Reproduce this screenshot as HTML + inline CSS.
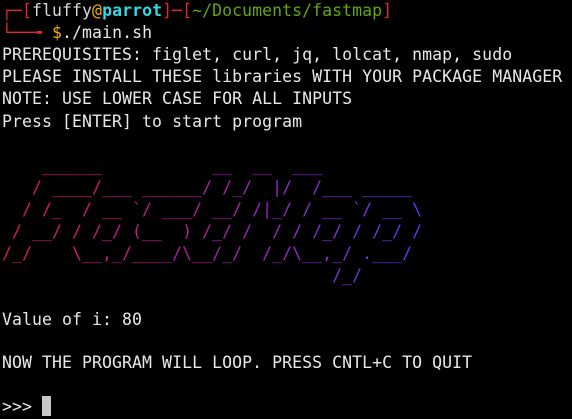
<!DOCTYPE html>
<html><head><meta charset="utf-8"><style>
html,body{margin:0;padding:0;background:#000;width:572px;height:419px;overflow:hidden}
.t{position:relative;font-family:"DejaVu Sans Mono","Liberation Mono",monospace;font-size:16.5px;color:#e8e8e8;white-space:pre;letter-spacing:0.07px}
.t div{position:absolute;left:2px;height:22px;line-height:22px;overflow:visible}
.r{color:#e8262a}.y{color:#f0b400}.c{color:#35d7e0;font-weight:bold}.g{color:#5fa80f}.w{color:#d8d8d8}
.f{background:linear-gradient(90deg,#e0185a 0px,#b01fa0 200px,#5a3cff 420px);-webkit-background-clip:text;background-clip:text;color:transparent;width:440px}
.cur{display:inline-block;width:9px;height:20px;background:#c8c8c8;vertical-align:-4px}
</style></head><body><div class="t">
<div style="top:0px"><span class="r">┌─[</span><span class="w">fluffy</span><span class="y">@</span><span class="c">parrot</span><span class="r">]─[</span><span class="g">~/Documents/fastmap</span><span class="r">]</span></div>
<div style="top:22px"><span class="r">└──╼ </span><span class="y">$</span>./main.sh</div>
<div style="top:44px">PREREQUISITES: figlet, curl, jq, lolcat, nmap, sudo</div>
<div style="top:66px">PLEASE INSTALL THESE libraries WITH YOUR PACKAGE MANAGER</div>
<div style="top:88px">NOTE: USE LOWER CASE FOR ALL INPUTS</div>
<div style="top:111px">Press [ENTER] to start program</div>
<div class="f" style="top:155px">    ______           __  __  ___</div>
<div class="f" style="top:177px">   / ____/___ ______/ /_/  |/  /___ _____</div>
<div class="f" style="top:199px">  / /_  / __ `/ ___/ __/ /|_/ / __ `/ __ \</div>
<div class="f" style="top:221px"> / __/ / /_/ (__  ) /_/ /  / / /_/ / /_/ /</div>
<div class="f" style="top:243px">/_/    \__,_/____/\__/_/  /_/\__,_/ .___/</div>
<div class="f" style="top:265px">                                 /_/</div>
<div style="top:309px">Value of i: 80</div>
<div style="top:352px">NOW THE PROGRAM WILL LOOP. PRESS CNTL+C TO QUIT</div>
<div style="top:396px">&gt;&gt;&gt; <span class="cur"></span></div>
</div></body></html>
